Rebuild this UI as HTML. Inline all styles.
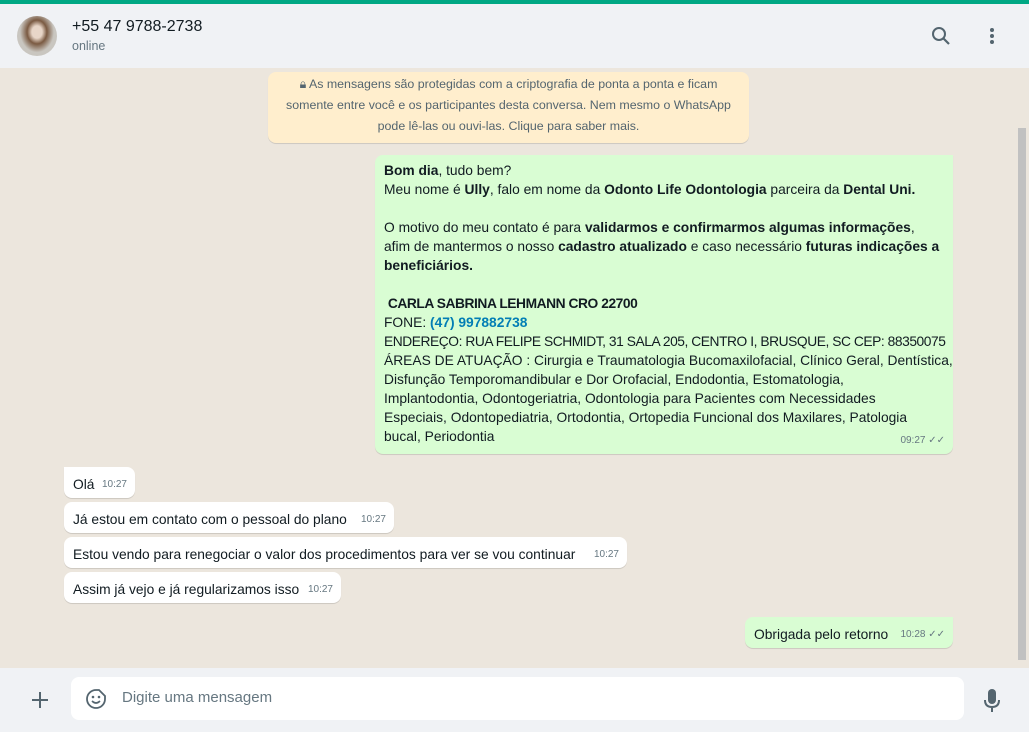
<!DOCTYPE html>
<html><head><meta charset="utf-8"><style>
*{margin:0;padding:0;box-sizing:border-box}
body{width:1029px;height:732px;overflow:hidden;font-family:"Liberation Sans",sans-serif;color:#111b21;background:#efeae2;position:relative}
.top{position:absolute;left:0;top:0;width:1029px;height:4px;background:#00a884}
.hdr{position:absolute;left:0;top:4px;width:1029px;height:64px;background:#f0f2f5}
.av{position:absolute;left:17px;top:12px;width:40px;height:40px;border-radius:50%;background:radial-gradient(ellipse at 50% 40%,#e8d6c8 0 18%,#7a5a42 35%,#c9c6c0 60%)}
.name{position:absolute;left:72px;top:14px;font-size:16px}
.st{position:absolute;left:72px;top:35px;font-size:12.5px;color:#667781}
.chat{position:absolute;left:0;top:68px;width:1029px;height:600px;background:#ece6dd}
.sb{position:absolute;left:1018px;top:128px;width:8px;height:532px;background:#c1c1c1}
.enc{position:absolute;left:268px;top:72px;width:481px;height:71px;background:#ffeecd;border-radius:8px;font-size:12.4px;color:#54656f;text-align:center;line-height:21px;padding-top:2px;box-shadow:0 1px .5px rgba(0,0,0,.13);white-space:nowrap}
.b{position:absolute;font-size:13.8px;line-height:19px;border-radius:8px;box-shadow:0 1px .5px rgba(0,0,0,.13);padding:8px 9px 6px;white-space:nowrap}
.o{background:#d9fdd3}.i{background:#fff}
.t{font-size:10px;color:#667781;position:absolute;bottom:4px;right:8px}
b{font-weight:bold}
.cap{letter-spacing:-0.45px}
.ft{position:absolute;left:0;top:668px;width:1029px;height:64px;background:#f0f2f5}
.in{position:absolute;left:71px;top:9px;width:893px;height:43px;background:#fff;border-radius:8px}
.ph{position:absolute;left:51px;top:12px;font-size:15px;color:#667781}
</style></head><body>
<div class="top"></div>
<div class="hdr"><div class="av"></div><div class="name">+55 47 9788-2738</div><div class="st">online</div>
<svg style="position:absolute;left:931px;top:22px" width="20" height="20" viewBox="0 0 20 20"><circle cx="8" cy="8" r="6" fill="none" stroke="#54656f" stroke-width="2"/><path d="M12.5 12.5L18 18" stroke="#54656f" stroke-width="2.2"/></svg>
<svg style="position:absolute;left:988px;top:22px" width="8" height="20"><circle cx="4" cy="4" r="2" fill="#54656f"/><circle cx="4" cy="10" r="2" fill="#54656f"/><circle cx="4" cy="16" r="2" fill="#54656f"/></svg>
</div>
<div class="chat"></div>
<div class="sb"></div>
<div class="enc">🔒︎ As mensagens são protegidas com a criptografia de ponta a ponta e ficam<br>somente entre você e os participantes desta conversa. Nem mesmo o WhatsApp<br>pode lê-las ou ouvi-las. Clique para saber mais.</div>
<div class="b o" style="left:375px;top:155px;width:578px;height:299px;border-top-right-radius:0;padding-top:6px">
<b>Bom dia</b>, tudo bem?<br>Meu nome é <b>Ully</b>, falo em nome da <b>Odonto Life Odontologia</b> parceira da <b>Dental Uni.</b><br><br>O motivo do meu contato é para <b>validarmos e confirmarmos algumas informações</b>,<br>afim de mantermos o nosso <b>cadastro atualizado</b> e caso necessário <b>futuras indicações a</b><br><b>beneficiários.</b><br><br>&nbsp;<b class="cap">CARLA SABRINA LEHMANN CRO 22700</b><br>FONE: <b style="color:#027eb5">(47) 997882738</b><br><span class="cap">ENDEREÇO: RUA FELIPE SCHMIDT, 31 SALA 205, CENTRO I, BRUSQUE, SC CEP: 88350075</span><br>ÁREAS DE ATUAÇÃO : Cirurgia e Traumatologia Bucomaxilofacial, Clínico Geral, Dentística,<br>Disfunção Temporomandibular e Dor Orofacial, Endodontia, Estomatologia,<br>Implantodontia, Odontogeriatria, Odontologia para Pacientes com Necessidades<br>Especiais, Odontopediatria, Ortodontia, Ortopedia Funcional dos Maxilares, Patologia<br>bucal, Periodontia
<span class="t">09:27 ✓✓</span></div>
<div class="b i" style="left:64px;top:467px;width:71px;height:31px;border-top-left-radius:0">Olá<span class="t">10:27</span></div>
<div class="b i" style="left:64px;top:502px;width:330px;height:31px">Já estou em contato com o pessoal do plano<span class="t">10:27</span></div>
<div class="b i" style="left:64px;top:537px;width:563px;height:31px">Estou vendo para renegociar o valor dos procedimentos para ver se vou continuar<span class="t">10:27</span></div>
<div class="b i" style="left:64px;top:572px;width:277px;height:31px">Assim já vejo e já regularizamos isso<span class="t">10:27</span></div>
<div class="b o" style="left:745px;top:617px;width:208px;height:31px;border-top-right-radius:0">Obrigada pelo retorno<span class="t">10:28 ✓✓</span></div>
<div class="ft">
<svg style="position:absolute;left:30px;top:22px" width="20" height="20"><path d="M10 2V18M2 10H18" stroke="#54656f" stroke-width="2"/></svg>
<div class="in"><svg style="position:absolute;left:14px;top:11px" width="22" height="22" viewBox="0 0 22 22"><path d="M11 2a9 9 0 1 0 9 9V8l-6-6z" fill="none" stroke="#54656f" stroke-width="1.8"/><circle cx="8" cy="9" r="1.3" fill="#54656f"/><circle cx="14" cy="9" r="1.3" fill="#54656f"/><path d="M7 13q4 4 8 0" fill="none" stroke="#54656f" stroke-width="1.6"/></svg><div class="ph">Digite uma mensagem</div></div>
<svg style="position:absolute;left:983px;top:20px" width="18" height="26" viewBox="0 0 18 26"><rect x="5" y="1" width="8" height="15" rx="4" fill="#54656f"/><path d="M2 12q0 7 7 7q7 0 7-7M9 19V24" fill="none" stroke="#54656f" stroke-width="2"/></svg>
</div>
</body></html>
